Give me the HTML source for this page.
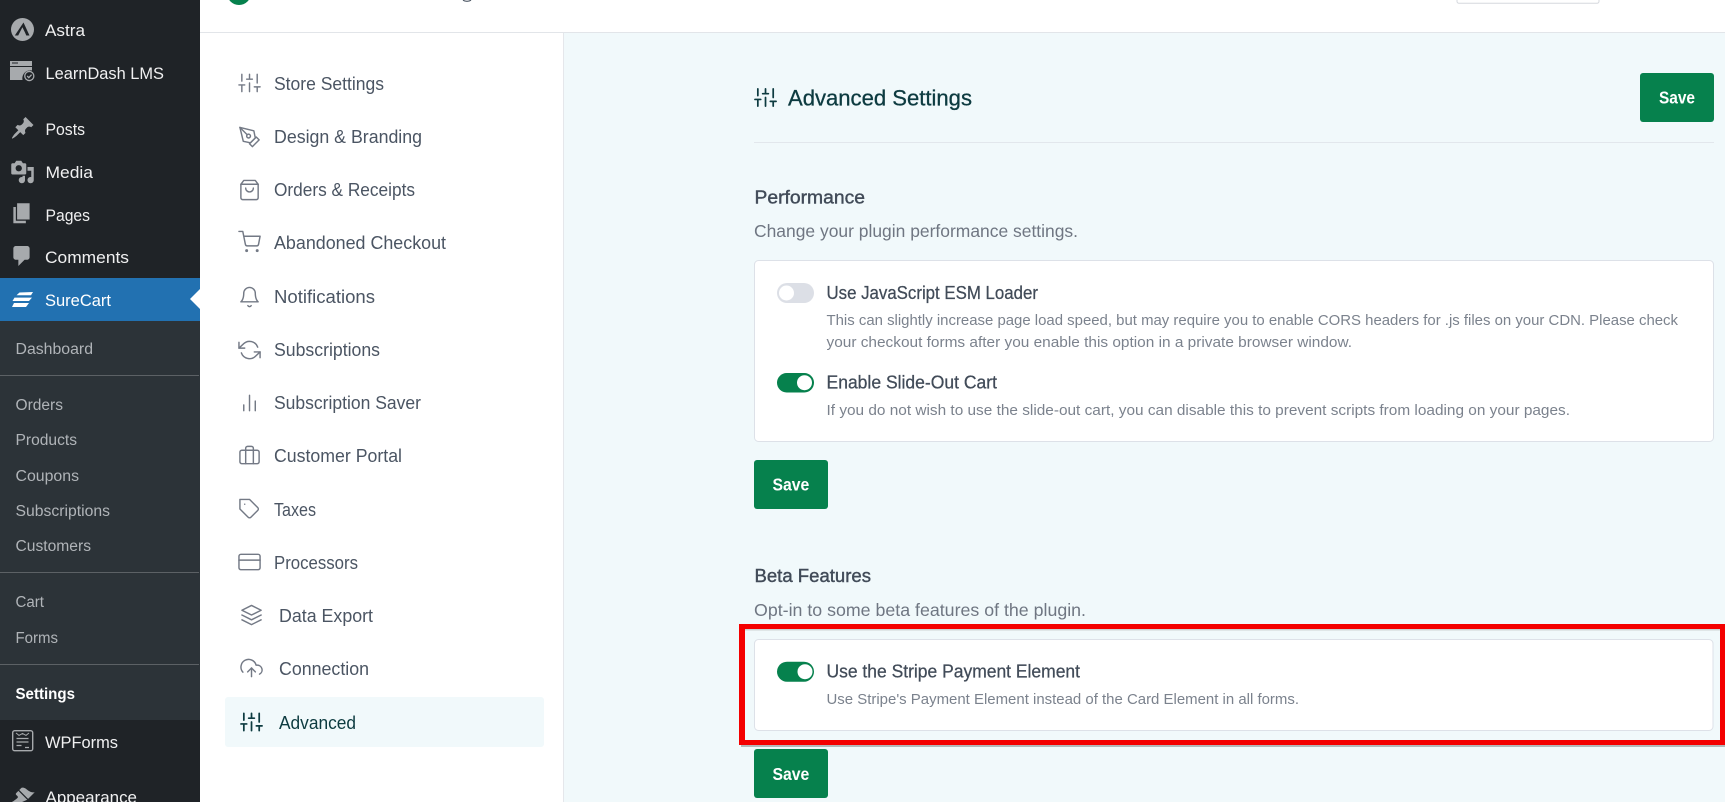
<!DOCTYPE html>
<html lang="en">
<head>
<meta charset="utf-8">
<title>SureCart Advanced Settings</title>
<style>
html,body{margin:0;padding:0;width:1725px;height:802px;overflow:hidden;background:#f1f9fb}
svg{display:block;position:absolute;left:0;top:0}
text{font-family:"Liberation Sans",sans-serif}
.wm{font-size:17px;fill:#f0f0f1}
.ws{font-size:15.5px;fill:#b0b4b8}
.nv{font-size:18.2px;fill:#4b5563}
.ni{fill:none;stroke:#737985;stroke-width:1.5;stroke-linecap:round;stroke-linejoin:round}
.dk{stroke:#0d3b40;stroke-width:1.8}
.hd{font-size:18.2px;fill:#414b58;stroke:#414b58;stroke-width:.4}
.sb{font-size:17.6px;fill:#6f7682}
.lb{font-size:18.2px;fill:#414b58;stroke:#414b58;stroke-width:.25}
.ds{font-size:15px;fill:#7b828d}
.sv{font-size:17.5px;fill:#fff;font-weight:bold}
.wi{fill:#a7aaad}
</style>
</head>
<body>
<svg width="1725" height="802" viewBox="0 0 1725 802" xmlns="http://www.w3.org/2000/svg">
<!-- backgrounds -->
<rect x="0" y="0" width="1725" height="802" fill="#f1f9fb"/>
<rect x="200" y="0" width="1525" height="32" fill="#fff"/>
<rect x="200" y="32" width="1525" height="1" fill="#e2e5e9"/>
<rect x="200" y="33" width="363" height="769" fill="#fff"/>
<rect x="563" y="33" width="1" height="769" fill="#e5e7eb"/>
<!-- header fragments -->
<circle cx="239" cy="-7" r="12" fill="#06814d"/>
<path d="M463 .2c2 1.500 6 1.500 8 0" fill="none" stroke="#4b5563" stroke-width="1.200"/>
<rect x="1457" y="-6" width="142" height="9.300" rx="2" fill="#fff" stroke="#d5d8dd"/>

<!-- WP sidebar -->
<rect x="0" y="0" width="200" height="802" fill="#1f2327"/>
<rect x="0" y="278" width="200" height="43" fill="#2271b1"/>
<rect x="0" y="321" width="200" height="399" fill="#2c3338"/>
<polygon points="200,289 190,299 200,309" fill="#fff"/>
<rect x="0" y="375" width="199" height="1" fill="#5c6165"/>
<rect x="0" y="572" width="199" height="1" fill="#5c6165"/>
<rect x="0" y="664" width="199" height="1" fill="#5c6165"/>

<!-- WP icons -->
<circle cx="22.500" cy="29.500" r="11.500" fill="#a7aaad"/>
<path d="M23.500 22.500l6 13h-3.200l-1.300-3-2.600-5.200-4.200 8.200h-3.400z" fill="#1f2327"/>
<path d="M10 61h22v5H10z" fill="#a7aaad"/>
<path d="M10 67h22v3.500a8 8 0 0 0-9.500 9.500H10z" fill="#a7aaad"/>
<path d="M12 63h6" stroke="#1f2327" stroke-width="1"/>
<circle cx="29.300" cy="76" r="5.200" fill="#a7aaad"/>
<circle cx="29.300" cy="76" r="3.900" fill="#1f2327"/>
<path d="M27.200 76l1.600 1.700 2.800-3" fill="none" stroke="#a7aaad" stroke-width="1.300"/>
<g transform="translate(10.200 115.500) scale(1.250)" class="wi"><path d="M10.440 3.020l1.820-1.820 6.360 6.350-1.830 1.820c-1.050-.68-2.480-.57-3.410.36l-.75.75c-.92.93-1.040 2.350-.35 3.410l-1.830 1.820-2.410-2.410-2.800 2.790c-.42.42-3.380 2.710-3.800 2.290s1.860-3.390 2.280-3.810l2.790-2.790L4.100 9.360l1.830-1.820c1.050.69 2.480.57 3.400-.36l.75-.75c.93-.92 1.050-2.350.36-3.410z"/></g>
<g transform="translate(10 159.500) scale(1.250)" class="wi"><path d="M13 11V4c0-.55-.45-1-1-1h-1.670L9 1H5L3.670 3H2c-.55 0-1 .45-1 1v7c0 .55.45 1 1 1h10c.55 0 1-.45 1-1zM7 4.500c1.380 0 2.500 1.120 2.500 2.500S8.380 9.500 7 9.500 4.500 8.380 4.500 7 5.620 4.500 7 4.500zM14 6h5v10.500c0 1.380-1.120 2.500-2.500 2.500S14 17.880 14 16.500s1.120-2.500 2.500-2.500c.17 0 .34.020.5.050V9h-3V6zm-4 8.050V13h2v3.500c0 1.380-1.120 2.500-2.500 2.500S7 17.880 7 16.500 8.120 14 9.500 14c.17 0 .34.020.5.050z"/></g>
<g transform="translate(9.600 200.800) scale(1.250)" class="wi"><path d="M6 15V2h10v13H6zm-1 1h8v2H3V5h2v11z"/></g>
<g transform="translate(9.600 243.500) scale(1.250)" class="wi"><path d="M5 2h9c1.100 0 2 .9 2 2v7c0 1.100-.9 2-2 2h-2l-5 5v-5H5c-1.100 0-2-.9-2-2V4c0-1.100.9-2 2-2z"/></g>
<path d="M19.500 292.500L33 292l-2 3.200H16.500zM14.500 297.600H32l-3 3.400H12.500zM14 303H29l-3 4H12z" fill="#fff"/>
<rect x="12.700" y="730.700" width="20" height="20" rx="2" fill="none" stroke="#a7aaad" stroke-width="1.400"/>
<path d="M16 733l3 2.400 3.500-2 3.500 2 3-2.400" fill="none" stroke="#a7aaad" stroke-width="1"/>
<path d="M16.500 738.500h12M16.500 742h12M16.500 745.500h5M25 747.500h4" stroke="#a7aaad" stroke-width="1.300"/>
<g transform="translate(10 785) scale(1.250)" class="wi"><path d="M14.480 11.060L7.410 3.990l1.500-1.500c.5-.56 2.300-.47 3.510.32 1.210.8 1.430 1.280 2.910 2.100 1.180.64 2.450 1.260 4.450.85zm-.71.71L6.700 4.700 4.930 6.470c-.39.39-.39 1.020 0 1.410l1.060 1.060c.39.39.39 1.030 0 1.420-.6.6-1.430 1.110-2.210 1.690-.35.26-.7.53-1.010.84C1.430 13.230 0 15 2 17z"/></g>

<!-- WP menu text -->
<text class="wm" x="45" y="36" textLength="40" lengthAdjust="spacingAndGlyphs">Astra</text>
<text class="wm" x="45.500" y="79" textLength="118.500" lengthAdjust="spacingAndGlyphs">LearnDash LMS</text>
<text class="wm" x="45.500" y="135" textLength="39.500" lengthAdjust="spacingAndGlyphs">Posts</text>
<text class="wm" x="45.500" y="178" textLength="47.500" lengthAdjust="spacingAndGlyphs">Media</text>
<text class="wm" x="45.500" y="221" textLength="44.500" lengthAdjust="spacingAndGlyphs">Pages</text>
<text class="wm" x="45" y="263" textLength="84" lengthAdjust="spacingAndGlyphs">Comments</text>
<text class="wm" x="45" y="306" textLength="66" lengthAdjust="spacingAndGlyphs" style="fill:#fff">SureCart</text>
<text class="ws" x="15.500" y="354" textLength="77.500" lengthAdjust="spacingAndGlyphs">Dashboard</text>
<text class="ws" x="15.500" y="410" textLength="47.500" lengthAdjust="spacingAndGlyphs">Orders</text>
<text class="ws" x="15.500" y="445" textLength="61.500" lengthAdjust="spacingAndGlyphs">Products</text>
<text class="ws" x="15.500" y="481" textLength="63.500" lengthAdjust="spacingAndGlyphs">Coupons</text>
<text class="ws" x="15.500" y="516" textLength="94.500" lengthAdjust="spacingAndGlyphs">Subscriptions</text>
<text class="ws" x="15.500" y="551" textLength="75.500" lengthAdjust="spacingAndGlyphs">Customers</text>
<text class="ws" x="15.500" y="607" textLength="28.500" lengthAdjust="spacingAndGlyphs">Cart</text>
<text class="ws" x="15.500" y="643" textLength="42.500" lengthAdjust="spacingAndGlyphs">Forms</text>
<text class="ws" x="15.500" y="699" textLength="59.500" lengthAdjust="spacingAndGlyphs" style="fill:#fff;font-weight:bold">Settings</text>
<text class="wm" x="45" y="748" textLength="73" lengthAdjust="spacingAndGlyphs">WPForms</text>
<text class="wm" x="45.500" y="803" textLength="91.500" lengthAdjust="spacingAndGlyphs">Appearance</text>

<!-- settings nav -->
<rect x="225" y="697" width="319" height="50" rx="3" fill="#f1f9fb"/>
<g class="ni">
<g transform="translate(238 71.500) scale(.96)"><path d="M4 21v-7M4 10V3M12 21v-9M12 8V3M20 21v-5M20 12V3M1 14h6M9 8h6M17 16h6"/></g>
<g transform="translate(238 125.500) scale(.96)"><path d="M12 19l7-7 3 3-7 7-3-3z"/><path d="M18 13l-1.500-7.500L2 2l3.500 14.500L13 18l5-5z"/><path d="M2 2l7.586 7.586"/><circle cx="11" cy="11" r="2"/></g>
<g transform="translate(238 178.500) scale(.96)"><path d="M6 2L3 6v14a2 2 0 0 0 2 2h14a2 2 0 0 0 2-2V6l-3-4z"/><path d="M3 6h18"/><path d="M16 10a4 4 0 0 1-8 0"/></g>
<g transform="translate(238 230.500) scale(.96)"><circle cx="9" cy="21" r=".8"/><circle cx="20" cy="21" r=".8"/><path d="M1 1h4l2.680 13.390a2 2 0 0 0 2 1.610h9.720a2 2 0 0 0 2-1.610L23 6H6"/></g>
<g transform="translate(238 285.500) scale(.96)"><path d="M18 8A6 6 0 0 0 6 8c0 7-3 9-3 9h18s-3-2-3-9"/><path d="M13.730 21a2 2 0 0 1-3.460 0"/></g>
<g transform="translate(238 338.500) scale(.96)"><path d="M1 4v6h6M23 20v-6h-6"/><path d="M20.490 9A9 9 0 0 0 5.640 5.640L1 10m22 4l-4.640 4.360A9 9 0 0 1 3.510 15"/></g>
<g transform="translate(238 391.500) scale(.96)"><path d="M18 20V10M12 20V4M6 20v-6"/></g>
<g transform="translate(238 443.500) scale(.96)"><rect x="2" y="7" width="20" height="14" rx="2"/><path d="M16 21V5a2 2 0 0 0-2-2h-4a2 2 0 0 0-2 2v16"/></g>
<g transform="translate(238 497.500) scale(.96)"><path d="M20.590 13.410l-7.170 7.170a2 2 0 0 1-2.830 0L2 12V2h10l8.590 8.590a2 2 0 0 1 0 2.820z"/><path d="M7 7h.01"/></g>
<g transform="translate(238 550.500) scale(.96)"><rect x="1" y="4" width="22" height="16" rx="2"/><path d="M1 10h22"/></g>
<g transform="translate(240 603.500) scale(.96)"><path d="M12 2L2 7l10 5 10-5-10-5z"/><path d="M2 17l10 5 10-5"/><path d="M2 12l10 5 10-5"/></g>
<g transform="translate(240 656.500) scale(.96)"><path d="M16 16l-4-4-4 4"/><path d="M12 12v9"/><path d="M20.390 18.390A5 5 0 0 0 18 9h-1.260A8 8 0 1 0 3 16.300"/></g>
<g transform="translate(240 710.500) scale(.96)" class="ni dk"><path d="M4 21v-7M4 10V3M12 21v-9M12 8V3M20 21v-5M20 12V3M1 14h6M9 8h6M17 16h6"/></g>
</g>
<text class="nv" x="274" y="90" textLength="110" lengthAdjust="spacingAndGlyphs">Store Settings</text>
<text class="nv" x="274" y="143" textLength="148" lengthAdjust="spacingAndGlyphs">Design &amp; Branding</text>
<text class="nv" x="274" y="196" textLength="141" lengthAdjust="spacingAndGlyphs">Orders &amp; Receipts</text>
<text class="nv" x="274" y="249" textLength="172" lengthAdjust="spacingAndGlyphs">Abandoned Checkout</text>
<text class="nv" x="274" y="303" textLength="101" lengthAdjust="spacingAndGlyphs">Notifications</text>
<text class="nv" x="274" y="356" textLength="106" lengthAdjust="spacingAndGlyphs">Subscriptions</text>
<text class="nv" x="274" y="409" textLength="147" lengthAdjust="spacingAndGlyphs">Subscription Saver</text>
<text class="nv" x="274" y="462" textLength="128" lengthAdjust="spacingAndGlyphs">Customer Portal</text>
<text class="nv" x="274" y="516" textLength="42" lengthAdjust="spacingAndGlyphs">Taxes</text>
<text class="nv" x="274" y="569" textLength="84" lengthAdjust="spacingAndGlyphs">Processors</text>
<text class="nv" x="279" y="622" textLength="94" lengthAdjust="spacingAndGlyphs">Data Export</text>
<text class="nv" x="279" y="675" textLength="90" lengthAdjust="spacingAndGlyphs">Connection</text>
<text class="nv" x="279" y="729" textLength="77" lengthAdjust="spacingAndGlyphs" style="fill:#0d3b40">Advanced</text>

<!-- main heading -->
<g transform="translate(754 86) scale(.96)" class="ni dk"><path d="M4 21v-7M4 10V3M12 21v-9M12 8V3M20 21v-5M20 12V3M1 14h6M9 8h6M17 16h6"/></g>
<text x="788" y="105.500" font-size="22.600" textLength="184" lengthAdjust="spacingAndGlyphs" fill="#0d3b40" stroke="#0d3b40" stroke-width=".3">Advanced Settings</text>
<rect x="1640" y="73" width="74" height="49" rx="3" fill="#06814d"/>
<text class="sv" x="1659" y="103.500" textLength="36" lengthAdjust="spacingAndGlyphs">Save</text>
<rect x="754" y="142" width="960" height="1" fill="#e2e7ec"/>

<!-- performance -->
<text class="hd" x="754.500" y="203.500" textLength="110.500" lengthAdjust="spacingAndGlyphs">Performance</text>
<text class="sb" x="754" y="237" textLength="324" lengthAdjust="spacingAndGlyphs">Change your plugin performance settings.</text>
<rect x="754.500" y="260.500" width="959" height="181" rx="4" fill="#fff" stroke="#dde1e8"/>
<rect x="777" y="283" width="37" height="20" rx="10" fill="#dcdfe6"/>
<circle cx="786.500" cy="293" r="7.500" fill="#fff"/>
<text class="lb" x="826.500" y="299" textLength="211.500" lengthAdjust="spacingAndGlyphs">Use JavaScript ESM Loader</text>
<text class="ds" x="826.500" y="325" textLength="851.500" lengthAdjust="spacingAndGlyphs">This can slightly increase page load speed, but may require you to enable CORS headers for .js files on your CDN. Please check</text>
<text class="ds" x="826.500" y="347" textLength="525.500" lengthAdjust="spacingAndGlyphs">your checkout forms after you enable this option in a private browser window.</text>
<rect x="777" y="373" width="37" height="19.500" rx="9.750" fill="#06814d"/>
<circle cx="804.500" cy="382.700" r="7.500" fill="#fff"/>
<text class="lb" x="826.500" y="388.700" textLength="170.500" lengthAdjust="spacingAndGlyphs">Enable Slide-Out Cart</text>
<text class="ds" x="826.500" y="415" textLength="743.500" lengthAdjust="spacingAndGlyphs">If you do not wish to use the slide-out cart, you can disable this to prevent scripts from loading on your pages.</text>
<rect x="754" y="460" width="74" height="49" rx="3" fill="#06814d"/>
<text class="sv" x="772.500" y="490.700" textLength="36.800" lengthAdjust="spacingAndGlyphs">Save</text>

<!-- beta -->
<text class="hd" x="754.500" y="582" textLength="116.500" lengthAdjust="spacingAndGlyphs">Beta Features</text>
<text class="sb" x="754" y="616" textLength="332" lengthAdjust="spacingAndGlyphs">Opt-in to some beta features of the plugin.</text>
<rect x="754.500" y="639.500" width="958.500" height="91" rx="4" fill="#fff" stroke="#dde1e8"/>
<rect x="777" y="661.700" width="37" height="20" rx="10" fill="#06814d"/>
<circle cx="805" cy="671.700" r="7.500" fill="#fff"/>
<text class="lb" x="826.500" y="677.700" textLength="253.500" lengthAdjust="spacingAndGlyphs">Use the Stripe Payment Element</text>
<text class="ds" x="826.500" y="704" textLength="472.500" lengthAdjust="spacingAndGlyphs">Use Stripe's Payment Element instead of the Card Element in all forms.</text>

<!-- red highlight -->
<rect x="745" y="629" width="975" height="1.500" fill="#8a8a8a" opacity=".35"/>
<rect x="741" y="745" width="984" height="2" fill="#777" opacity=".5"/>
<path fill="#f40000" fill-rule="evenodd" d="M739 624H1725V745H739zM745 629V740H1720V629z"/>

<rect x="754" y="749" width="74" height="49" rx="3" fill="#06814d"/>
<text class="sv" x="772.500" y="780" textLength="36.800" lengthAdjust="spacingAndGlyphs">Save</text>
</svg>
</body>
</html>
